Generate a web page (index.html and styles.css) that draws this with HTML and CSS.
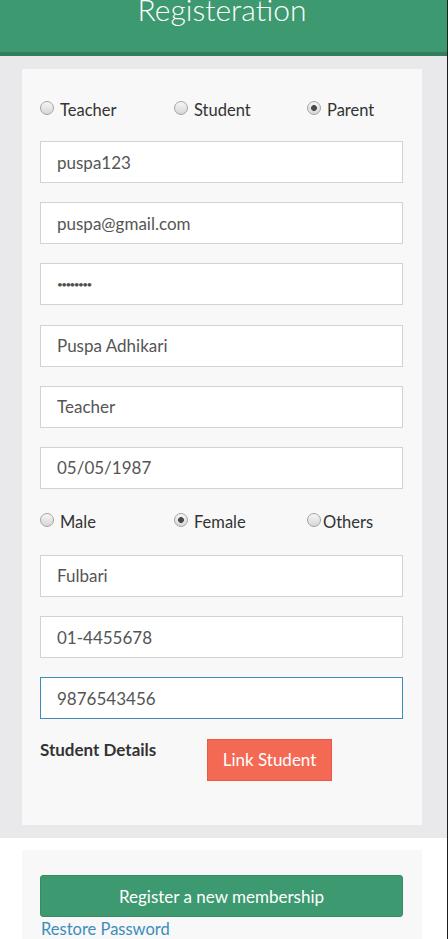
FILE: index.html
```html
<!DOCTYPE html>
<html lang="en">
<head>
<meta charset="utf-8">
<title>Registeration</title>
<link rel="stylesheet" href="styles.css">
</head>
<body>
<div class="page">
  <header class="header">
    <h1 class="title">Registeration</h1>
  </header>
  <main class="main">
    <form class="card">
      <div class="radio-row first">
        <label class="radio"><input type="radio" name="role"><span>Teacher</span></label>
        <label class="radio"><input type="radio" name="role"><span>Student</span></label>
        <label class="radio"><input type="radio" name="role" checked><span>Parent</span></label>
      </div>
      <input class="field" type="text" value="puspa123">
      <input class="field" type="text" value="puspa@gmail.com">
      <input class="field password" type="password" value="12345678">
      <input class="field" type="text" value="Puspa Adhikari">
      <input class="field" type="text" value="Teacher">
      <input class="field last" type="text" value="05/05/1987">
      <div class="radio-row gender">
        <label class="radio"><input type="radio" name="gender"><span>Male</span></label>
        <label class="radio"><input type="radio" name="gender" checked><span>Female</span></label>
        <label class="radio tight"><input type="radio" name="gender"><span>Others</span></label>
      </div>
      <input class="field" type="text" value="Fulbari">
      <input class="field" type="text" value="01-4455678">
      <input class="field active" id="mobile" type="text" value="9876543456">
      <div class="student-row">
        <span class="student-label">Student Details</span>
        <button type="button" class="btn-link-student">Link Student</button>
      </div>
    </form>
  </main>
  <section class="footer-card">
    <button type="button" class="btn-register">Register a new membership</button>
    <a class="restore" href="#">Restore Password</a>
  </section>
</div>
<script src="script.js"></script>
</body>
</html>
```

FILE: styles.css
```css
html, body {
  margin: 0;
  padding: 0;
  overflow: hidden;
}

body {
  font-family: Lato, "Open Sans", sans-serif;
  font-size: 16.5px;
  line-height: 20px;
  color: #333;
  background: #fff;
}

.page {
  width: 447px;
  height: 939px;
  border-right: 1px solid #1e1e1e;
  overflow: hidden;
  background: #fff;
}

.header {
  height: 52px;
  background: #3d9970;
  border-bottom: 4px solid #337f5d;
  overflow: hidden;
  text-align: center;
  color: #fff;
}

.title {
  margin: -6px 0 0;
  padding-right: 3px;
  font-size: 30px;
  line-height: 30px;
  font-weight: 300;
}

.main {
  background: #e9e9eb;
  padding: 13px 25px 13px 22px;
}

.card {
  background: #f8f8f8;
  padding: 30.5px 19px 44px 18px;
  height: 756px;
  box-sizing: border-box;
}

.radio-row {
  display: grid;
  grid-template-columns: 134px 133px auto;
  height: 20px;
}

.radio-row.first {
  margin-bottom: 21.5px;
}

.radio-row.gender {
  margin-top: 23.5px;
  margin-bottom: 22.5px;
}

.radio {
  display: flex;
  align-items: flex-start;
  gap: 6px;
  color: #333;
}

.radio.tight {
  gap: 2px;
}

.radio input {
  -webkit-appearance: none;
  appearance: none;
  margin: 1px 0 0;
  width: 14px;
  height: 14px;
  border-radius: 50%;
  border: 1px solid #a4a4a4;
  background: linear-gradient(#f6f6f6, #d6d6d6);
  box-sizing: border-box;
  flex: none;
}

.radio input:checked {
  background: radial-gradient(circle, #4a4a4a 0 2.6px, transparent 3.2px), linear-gradient(#f6f6f6, #d6d6d6);
}

.field {
  display: block;
  width: 363px;
  height: 42px;
  box-sizing: border-box;
  margin: 0 0 19.2px;
  padding: 0 16px;
  border: 1px solid #d2d2d2;
  background: #fff;
  font-family: Lato, "Open Sans", sans-serif;
  font-size: 17px;
  color: #555;
  outline: none;
  border-radius: 0;
  caret-color: #333;
}

.field.password {
  font-size: 10px;
  letter-spacing: -1.6px;
  color: #4f4f4f;
}

.field.last {
  margin-bottom: 0;
}

.field.active {
  border-color: #3c8dbc;
}

.student-row {
  display: flex;
  align-items: flex-start;
}

.student-label {
  width: 167px;
  margin-top: 1.5px;
  font-size: 17px;
  font-weight: 700;
  color: #333;
}

.btn-link-student {
  height: 42px;
  padding: 0 10px;
  width: 125px;
  background: #f46954;
  border: 1px solid #e85a45;
  color: #fff;
  font-family: Lato, "Open Sans", sans-serif;
  font-size: 17px;
  border-radius: 0;
}

.footer-card {
  margin: 12px 25px 0 22px;
  background: #f8f8f8;
  padding: 25px 19px 20px 18px;
}

.btn-register {
  display: block;
  width: 363px;
  height: 42px;
  background: #3d9970;
  border: 1px solid #378b66;
  border-radius: 3px;
  color: #fff;
  font-family: Lato, "Open Sans", sans-serif;
  font-size: 17px;
}

.restore {
  display: block;
  margin-top: 2px;
  padding-left: 1px;
  color: #3c8dbc;
  text-decoration: none;
}
```

FILE: script.js
```js
var el = document.getElementById('mobile');
el.focus();
el.setSelectionRange(el.value.length, el.value.length);
```
